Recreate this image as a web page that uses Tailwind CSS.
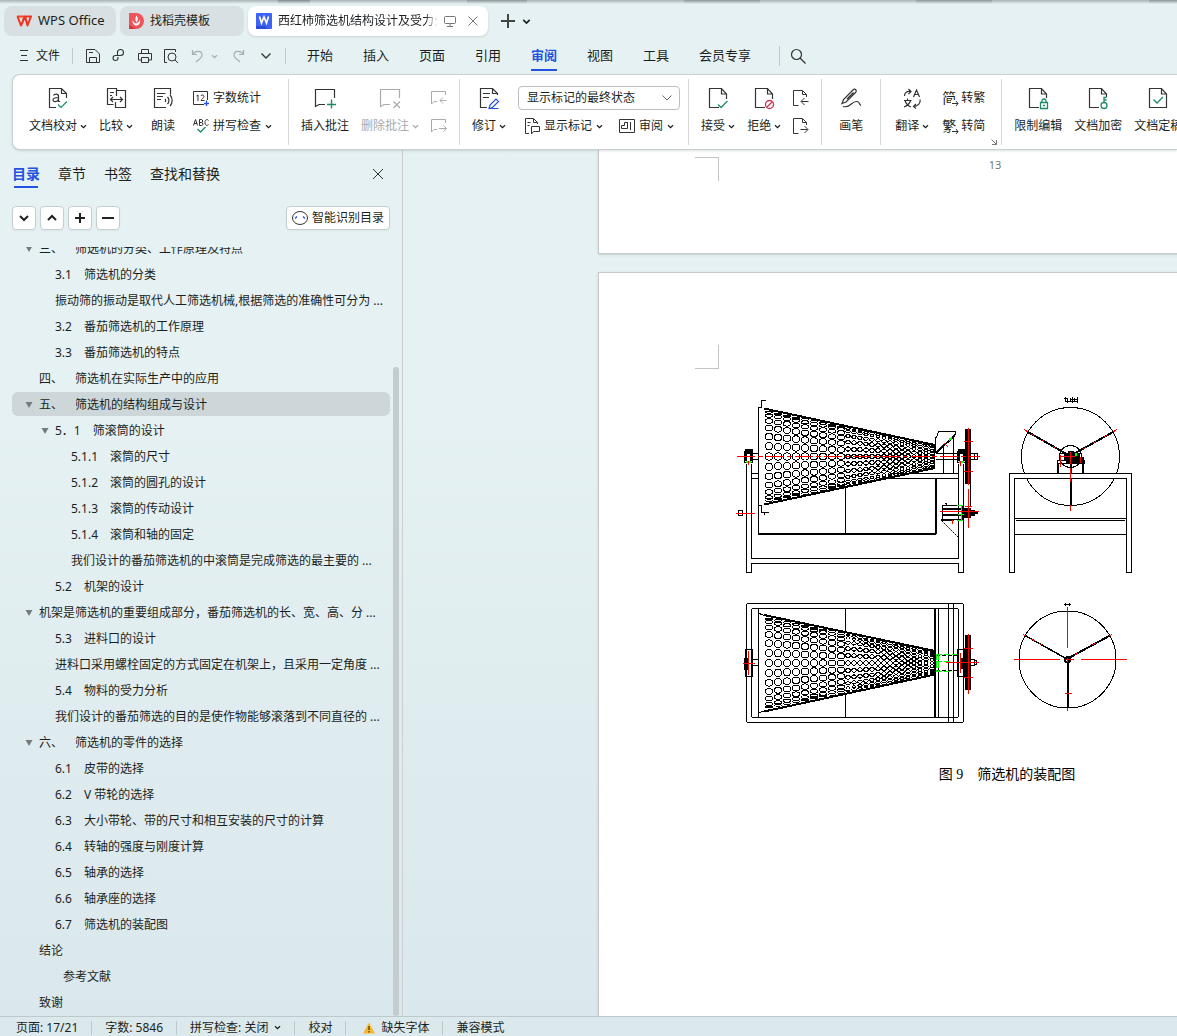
<!DOCTYPE html>
<html lang="zh-CN">
<head>
  <meta charset="UTF-8" />
  <meta name="viewport" content="width=device-width, initial-scale=1.0" />
  <title>WPS Office</title>
  <script src="https://cdn.jsdelivr.net/npm/@tailwindcss/browser@4"></script>
</head>
<body class="h-screen flex flex-col overflow-hidden bg-linear-to-b from-[#e5f1f2] from-40% to-[#dae7ec] text-xs text-[#1c1f21] [text-spacing-trim:space-all] font-['Noto_Sans','Noto_Sans_CJK_SC',sans-serif]">

  <!-- Shared icons -->
  <svg class="hidden">
    <symbol id="chev" viewBox="0 0 7 7"><path d="M1 2.3 L3.5 4.7 L6 2.3" fill="none" stroke="currentColor" stroke-width="1.3" /></symbol>
    <symbol id="page" viewBox="0 0 24 24"><path d="M20.500 13V8L15.500 2.500H3.500V21.500H13M15.500 3V8H20.500" fill="none" stroke="#333" stroke-width="1.200" /></symbol>
    <symbol id="arrow" viewBox="0 0 10 10"><path d="M1.500 2H8.500L5 8z" fill="#757b7d" /></symbol>
  </svg>

  <!-- Tabs -->
  <header class="shrink-0">
    <div class="relative h-1 flex justify-between pl-[278px] bg-[#a9b3b5]">
      <span class="w-8 bg-[#7f8789]"></span>
      <span class="w-15 bg-[#8b9496]"></span>
      <span class="w-19 bg-[#8b9496]"></span>
      <span class="w-19 bg-[#8b9496]"></span>
      <span class="w-7 bg-[#8b9496]"></span>
      <div class="absolute inset-0 bg-linear-to-b from-[#e5f1f2]/0 to-[#e5f1f2]"></div>
    </div>
    <div class="flex items-center gap-1 px-1 pt-0.5">
      <button class="h-[30px] w-28 px-3 flex items-center gap-1.5 rounded-lg bg-[#d8e0e3]">
        <svg class="w-4 h-3 shrink-0" viewBox="0 0 16 12" fill="none" stroke-width="2" stroke-linejoin="round">
          <path d="M1 1.500H8.500L7 5.500" stroke="#f04a2a" />
          <path d="M1.500 1.500L5 10.500L9 1.500L11.500 10.500L15 1.500H10" stroke="#ee3320" />
        </svg>
        <span class="text-[13px] whitespace-nowrap">WPS Office</span>
      </button>
      <button class="h-[30px] w-[124px] px-2 flex items-center gap-1.5 rounded-lg bg-[#d8e0e3]">
        <svg class="size-4 shrink-0" viewBox="0 0 16 16">
          <path d="M1 0h7a7.500 7.500 0 0 1 0 16H1z" fill="#ef5459" />
          <path d="M1 12l7 4H1z" fill="#d8363f" />
          <path d="M8.500 2.500C10.500 5 10 7.500 8.500 9.500C7 7.500 7 5 8.500 2.500zM4.500 6.500C5 8.500 6 10 8 10.500C10 10 11.500 8.500 12 6C12.500 9.500 11.500 12.500 8.500 12.500S4.500 10 4.500 6.500z" fill="#fff" />
        </svg>
        <span>找稻壳模板</span>
      </button>
      <div class="h-[30px] w-60 px-2 flex items-center gap-1.5 rounded-lg bg-white shadow">
        <svg class="size-4 shrink-0" viewBox="0 0 16 16">
          <rect width="16" height="16" rx="1" fill="#3c63f5" /><path d="M0 13h9l3 3H0z" fill="#2a4bd8" />
          <path d="M3.500 3.500L5.500 10L8 4L10.500 10L12.500 3.500" fill="none" stroke="#fff" stroke-width="1.700" />
        </svg>
        <span class="flex-1 overflow-hidden whitespace-nowrap mask-r-from-92%">西红柿筛选机结构设计及受力分析</span>
        <svg class="size-3 shrink-0" viewBox="0 0 12 12" fill="none" stroke="#777"><rect x="0.500" y="1.500" width="11" height="7" rx="1" /><path d="M6 9v2M3 11.500h6" /></svg>
        <button aria-label="关闭标签" class="ml-1.5 mr-0.5"><svg class="size-2.5" viewBox="0 0 10 10" stroke="#777"><path d="M0.500 0.500l9 9M9.500 0.500l-9 9" /></svg></button>
      </div>
      <button aria-label="新建" class="ml-2"><svg class="size-4" viewBox="0 0 16 16" stroke="#444" stroke-width="2"><path d="M8 1v14M1 8h14" /></svg></button>
      <button aria-label="更多标签" class="ml-0.5"><svg class="size-[9px]"><use href="#chev" /></svg></button>
    </div>
  </header>

  <!-- Menu bar -->
  <nav class="shrink-0 h-[38px] flex items-center pl-5 pt-0.5 whitespace-nowrap">
    <button class="flex items-center gap-2 w-[52px]">
      <svg class="w-2 h-3 shrink-0" viewBox="0 0 8 12" stroke="#333"><path d="M0 0.500h8M1 5.500h6M0 10.500h8" /></svg>文件
    </button>
    <span class="w-px h-4 bg-[#bccacc]"></span>
    <div class="flex items-center gap-2.5 pl-3 text-[#333]">
      <button aria-label="保存"><svg class="size-4" viewBox="0 0 16 16" fill="none" stroke="currentColor"><path d="M1.500 1.500H10L14.500 6V14.500H1.500zM4.500 14V9.500H11.500V14M4 4.500H8" /></svg></button>
      <button aria-label="分享"><svg class="size-4" viewBox="0 0 16 16" fill="none" stroke="currentColor" stroke-width="1.100"><path d="M6.500 7.500V4.500A3 3 0 1 1 9.500 7.500H4.500A2.500 2.500 0 1 0 7 10V9" /></svg></button>
      <button aria-label="打印"><svg class="size-4" viewBox="0 0 16 16" fill="none" stroke="currentColor"><path d="M4.500 5V1.500H11.500V5M4 12H1.500V5.500H14.500V12H12M4.500 9.500H11.500V14.500H4.500z" /></svg></button>
      <button aria-label="打印预览"><svg class="size-4" viewBox="0 0 16 16" fill="none" stroke="currentColor"><path d="M4 14.500H1.500V1.500H12.500V4" /><circle cx="9" cy="9" r="4" /><path d="M12 12L15 15" /></svg></button>
      <button aria-label="撤销" class="text-[#a3afb1] flex items-center gap-1.5"><svg class="size-4" viewBox="0 0 16 16" fill="none" stroke="currentColor" stroke-width="1.200"><path d="M3.500 2V6.500H8M3.500 6.500C6 2.500 13 2 13 7C13 10 9 12 7 14" /></svg><svg class="size-[7px]"><use href="#chev" /></svg></button>
      <button aria-label="恢复" class="ml-[3px] text-[#a3afb1]"><svg class="size-4" viewBox="0 0 16 16" fill="none" stroke="currentColor" stroke-width="1.200"><path d="M12.500 2V6.500H8M12.500 6.500C10 2.500 3 2 3 7C3 10 7 12 9 14" /></svg></button>
      <button aria-label="更多命令" class="ml-1"><svg class="w-2.5 h-2" viewBox="0 0 10 8" fill="none" stroke="currentColor" stroke-width="1.300"><path d="M0.500 1.500L5 6L9.500 1.500" /></svg></button>
    </div>
    <span class="w-px h-4 ml-3.5 bg-[#bccacc]"></span>
    <div class="flex gap-[30px] pl-[21px] pt-0.5 text-[13px]">
      <a href="#" class="py-1">开始</a>
      <a href="#" class="py-1">插入</a>
      <a href="#" class="py-1">页面</a>
      <a href="#" class="py-1">引用</a>
      <a href="#" class="py-1 border-b-2 border-[#2452e0] font-bold text-[#2452e0]">审阅</a>
      <a href="#" class="py-1">视图</a>
      <a href="#" class="py-1">工具</a>
      <a href="#" class="py-1">会员专享</a>
    </div>
    <span class="w-px h-5 ml-7 bg-[#bccacc]"></span>
    <button aria-label="搜索" class="ml-2.5"><svg class="size-4" viewBox="0 0 16 16" fill="none" stroke="#333" stroke-width="1.200"><circle cx="6.500" cy="6.500" r="5" /><path d="M10 10L15.500 15.500" /></svg></button>
  </nav>

  <!-- Ribbon -->
  <section class="relative z-10 shrink-0 h-[76px] ml-3 flex items-center rounded-l-lg border border-r-0 border-[#c6d2d3] bg-white shadow-sm whitespace-nowrap overflow-hidden *:shrink-0">
    <div class="h-[66px] flex items-center gap-3 pl-4 pr-4 pb-1 border-r border-[#d4d8d9]">
      <button class="flex flex-col gap-2">
        <svg class="size-6 self-center" viewBox="0 0 24 24" fill="none" stroke-width="1.200"><path d="M20.500 12V7.500L15.500 2.500H3.500V21.500H10M15.500 3V7.500H20.500" stroke="#333" /><path d="M7.500 9.500C8.500 7.500 12.500 7.500 12.500 10V15.500H14M12.500 11.500C9 11.500 7 12 7 14C7 16.500 11.500 16 12.500 13.500" stroke="#333" /><path d="M12 18.500L15 21.500L21 15.500" stroke="#1f8a68" /></svg>
        <span class="flex items-center gap-[3px]">文档校对<svg class="size-[7px]"><use href="#chev" /></svg></span>
      </button>
      <button class="flex flex-col gap-2 mr-1.5">
        <svg class="size-6 self-center" viewBox="0 0 24 24" fill="none" stroke="#333" stroke-width="1.200"><path d="M9.500 18.500H3.500V2.500H12.500V10M12.500 4.500H21.500V21.500H11.500V16M6 6.500H10M6 9.500H8M6.500 13.500H18.500M9 11L6.500 13.500L9 16M16 11L18.500 13.500L16 16" /></svg>
        <span class="flex items-center gap-[3px]">比较<svg class="size-[7px]"><use href="#chev" /></svg></span>
      </button>
      <button class="flex flex-col gap-2 mr-1.5">
        <svg class="size-6 self-center" viewBox="0 0 24 24" fill="none" stroke="#333" stroke-width="1.200"><path d="M19.500 8.500V2.500H3.500V21.500H15M6 7.500H14.500M6 10.500H12M6 13.500H10M14 13a2 2 0 0 1 0 3M16.500 11a5 5 0 0 1 0 7M19 9a8 8 0 0 1 0 11" /></svg>
        <span>朗读</span>
      </button>
      <div class="flex flex-col gap-3 pt-1">
        <button class="flex items-center gap-1">
          <svg class="size-4" viewBox="0 0 16 16" fill="none"><path d="M11 14.500H0.500V1.500H14.500V10" stroke="#333" /><path d="M3.500 6L5 5V11M8 6C8 4.500 11 4.500 11 6.500C11 8 8 9.500 8 10.500H11.500" stroke="#333" /><path d="M13.500 10.500V16M11 13.500H16" stroke="#2452e0" stroke-width="1.300" /></svg>字数统计
        </button>
        <button class="flex items-center gap-1">
          <svg class="size-4" viewBox="0 0 16 16" fill="none"><path d="M0.500 7.500L2.500 1.500L4.500 7.500M1 5.500H4M6.500 1.500V7.500H8.500C10.500 7.500 10.500 4.500 8.500 4.500H6.500M6.500 1.500H8.500C10 1.500 10 4.500 8.500 4.500M15.500 2.500C13.500 0.500 12 2 12 4.500S13.500 8.500 15.500 6.500" stroke="#333" /><path d="M4.500 11L7.500 14L12.500 9" stroke="#1f8a68" stroke-width="1.300" /></svg>拼写检查<svg class="size-[7px]"><use href="#chev" /></svg>
        </button>
      </div>
    </div>

    <div class="h-[66px] flex items-center gap-3 px-3 pb-1 border-r border-[#d4d8d9]">
      <button class="flex flex-col gap-2">
        <svg class="size-6 self-center" viewBox="0 0 24 24" fill="none" stroke-width="1.200"><path d="M21.500 12V3.500H2.500V20.500L6 18.500H12" stroke="#333" /><path d="M18.500 13.500V22.500M14 18.500H23" stroke="#1f8a68" stroke-width="1.400" /></svg>
        <span>插入批注</span>
      </button>
      <button class="flex flex-col gap-2 text-[#aaa]" disabled>
        <svg class="size-6 self-center" viewBox="0 0 24 24" fill="none" stroke="currentColor" stroke-width="1.200"><path d="M21.500 12V3.500H2.500V20.500L6 18.500H12M15.500 15.500L22 22M22 15.500L15.500 22" /></svg>
        <span class="flex items-center gap-[3px]">删除批注<svg class="size-[7px]"><use href="#chev" /></svg></span>
      </button>
      <div class="flex flex-col gap-3 pt-1 text-[#aaa]">
        <button aria-label="上一条批注" disabled><svg class="size-4" viewBox="0 0 16 16" fill="none" stroke="currentColor"><path d="M14.500 5V1.500H0.500V14L3 11.500H6M15.500 10.500H9M12 7.500L9 10.500L12 13.500" /></svg></button>
        <button aria-label="下一条批注" disabled><svg class="size-4" viewBox="0 0 16 16" fill="none" stroke="currentColor"><path d="M14.500 5V1.500H0.500V14L3 11.500H6M8 10.500H15.500M12.500 7.500L15.500 10.500L12.500 13.500" /></svg></button>
      </div>
    </div>

    <div class="h-[66px] flex items-center gap-3 pl-3 pr-2 pb-1 border-r border-[#d4d8d9]">
      <button class="flex flex-col gap-2">
        <svg class="size-6 self-center" viewBox="0 0 24 24" fill="none" stroke-width="1.200"><path d="M20.500 9V7.500L15.500 2.500H3.500V21.500H10M15.500 3V7.500H20.500M6 7.500H13M6 11.500H12" stroke="#333" /><path d="M12 22.500L13 19L19 13L21.500 15.500L15.500 21.500zH21.500" stroke="#2452e0" /></svg>
        <span class="flex items-center gap-[3px]">修订<svg class="size-[7px]"><use href="#chev" /></svg></span>
      </button>
      <div class="flex flex-col gap-2">
        <div class="relative">
          <select aria-label="修订显示状态" class="appearance-none w-[162px] h-6 pl-2 border border-[#b9bfc1] rounded bg-white">
            <option>显示标记的最终状态</option>
            <option>最终状态</option>
            <option>显示标记的原始状态</option>
            <option>原始状态</option>
          </select>
          <svg class="absolute right-2 top-2 w-2.5 h-2 pointer-events-none" viewBox="0 0 10 8" fill="none" stroke="#666"><path d="M0.500 1.500L5 6L9.500 1.500" /></svg>
        </div>
        <div class="flex justify-between pl-1.5 pr-1.5">
          <button class="flex items-center gap-1">
            <svg class="size-4" viewBox="0 0 16 16" fill="none" stroke="#333"><path d="M5 15.500H1.500V0.500H9.500L13.500 4.500V6M9.500 1V4.500H13M3.500 4.500H6.500M3.500 7.500H5.500M7.500 16V8.500H15.500V13.500H9.500z" /></svg>显示标记<svg class="size-[7px]"><use href="#chev" /></svg>
          </button>
          <button class="flex items-center gap-1">
            <svg class="size-4" viewBox="0 0 16 16" fill="none" stroke="#333"><path d="M0.500 1.500H15.500V14.500H0.500zM11.500 4V12M8.500 4V10.500H2.500V7.500H5.500V4.500H8.500" /></svg>审阅<svg class="size-[7px]"><use href="#chev" /></svg>
          </button>
        </div>
      </div>
    </div>

    <div class="h-[66px] flex items-center gap-3 px-3 pb-1 border-r border-[#d4d8d9]">
      <button class="flex flex-col gap-2">
        <svg class="size-6 self-center" viewBox="0 0 24 24" fill="none"><use href="#page" /><path d="M12 18.500L15 21.500L21.500 15" stroke="#1f8a68" stroke-width="1.300" /></svg>
        <span class="flex items-center gap-[3px]">接受<svg class="size-[7px]"><use href="#chev" /></svg></span>
      </button>
      <button class="flex flex-col gap-2">
        <svg class="size-6 self-center" viewBox="0 0 24 24" fill="none"><use href="#page" /><circle cx="17.500" cy="18.500" r="5" fill="#fff" /><circle cx="17.500" cy="18.500" r="4" stroke="#cf3350" stroke-width="1.300" /><path d="M15 21L20 16" stroke="#cf3350" stroke-width="1.300" /></svg>
        <span class="flex items-center gap-[3px]">拒绝<svg class="size-[7px]"><use href="#chev" /></svg></span>
      </button>
      <div class="flex flex-col gap-3 pt-1">
        <button aria-label="上一条修订"><svg class="size-4" viewBox="0 0 16 16" fill="none" stroke="#333"><path d="M5.500 15.500H0.500V0.500H9.500L13.500 4.500V7M9.500 1V4.500H13.500M15.500 11.500H8.500M11.500 8L8 11.500L11.500 15" /></svg></button>
        <button aria-label="下一条修订"><svg class="size-4" viewBox="0 0 16 16" fill="none" stroke="#333"><path d="M5.500 15.500H0.500V0.500H9.500L13.500 4.500V7M9.500 1V4.500H13.500M7.500 11.500H14.500M11.500 8L15 11.500L11.500 15" /></svg></button>
      </div>
    </div>

    <div class="h-[66px] flex items-center px-[17px] pb-1 border-r border-[#d4d8d9]">
      <button class="flex flex-col gap-2">
        <svg class="size-6 self-center" viewBox="0 0 24 24" fill="none" stroke="#333" stroke-width="1.200"><path d="M3 17.500L4.500 13.500L14 4C16 2 18.500 4.500 16.500 6.500L7 16zM14.500 6.500L8 13M4 20.500C12 22.500 12 15 18 15.500C21 16 20 18.500 22 19.500" /></svg>
        <span>画笔</span>
      </button>
    </div>

    <div class="relative h-[66px] flex items-center gap-3 pl-3.5 pr-4 pb-1 border-r border-[#d4d8d9]">
      <button class="flex flex-col gap-2">
        <svg class="size-6 self-center" viewBox="0 0 24 24" fill="none" stroke="#333" stroke-width="1.200"><path d="M4.500 10C4.500 6.500 7 5 10.500 5.500M8.500 3L11 5.500L8.500 8M13.500 11L16.500 4L19.500 11M14.500 8.500H18.500M4 14.500H11.500M7.500 12.500V14.500M5 14.500C6 18 8 20 11 21M10.500 14.500C9.500 18 7 20 4 21M20 13.500C21 17 18 20 14 20.500M16 18L13.500 20.500L16 22.500" /></svg>
        <span class="flex items-center gap-[3px]">翻译<svg class="size-[7px]"><use href="#chev" /></svg></span>
      </button>
      <div class="flex flex-col gap-3 pt-1">
        <button class="flex items-center gap-1"><span class="relative w-4 text-sm leading-4">简<svg class="absolute -right-0.5 bottom-0 w-2 h-1.5 bg-white" viewBox="0 0 8 6" fill="none" stroke="#333"><path d="M1 3.500H7M5 1L7 3.500L5 6" /></svg></span>转繁</button>
        <button class="flex items-center gap-1"><span class="relative w-4 text-sm leading-4">繁<svg class="absolute -right-0.5 bottom-0 w-2 h-1.5 bg-white" viewBox="0 0 8 6" fill="none" stroke="#333"><path d="M1 3.500H7M5 1L7 3.500L5 6" /></svg></span>转简</button>
      </div>
      <button aria-label="中文简繁转换设置" class="absolute right-1 bottom-0"><svg class="size-1.5" viewBox="0 0 6 6" fill="none" stroke="#777"><path d="M0.500 0.500L5.500 5.500M5.500 1V5.500H1" /></svg></button>
    </div>

    <div class="h-[66px] flex items-center gap-3 px-3 pb-1">
      <button class="flex flex-col gap-2">
        <svg class="size-6 self-center" viewBox="0 0 24 24" fill="none"><use href="#page" /><path d="M13 12H23V24H13z" fill="#fff" /><path d="M14.500 16.500H21.500V22.500H14.500zM16 16.500V14.500C16 12.500 20 12.500 20 14.500V16.500M17 19.500H19" stroke="#1f8a68" stroke-width="1.300" /></svg>
        <span>限制编辑</span>
      </button>
      <button class="flex flex-col gap-2">
        <svg class="size-6 self-center" viewBox="0 0 24 24" fill="none"><use href="#page" /><path d="M14 11H22V24H14z" fill="#fff" /><circle cx="18" cy="19.500" r="3" stroke="#1f8a68" stroke-width="1.300" /><path d="M18 16.500V11.500H20.500M18 14H20.500" stroke="#1f8a68" stroke-width="1.300" /></svg>
        <span>文档加密</span>
      </button>
      <button class="flex flex-col gap-2">
        <svg class="size-6 self-center" viewBox="0 0 24 24" fill="none"><path d="M3.500 2.500H15.500L20.500 8V21.500H3.500zM15.500 3V8H20.500" stroke="#333" stroke-width="1.200" /><path d="M7.500 13.500L11 17L17 11" stroke="#1f8a68" stroke-width="1.300" /></svg>
        <span>文档定稿</span>
      </button>
    </div>
  </section>

  <main class="flex-1 min-h-0 flex">
    <!-- Outline pane -->
    <aside class="w-[403px] shrink-0 flex flex-col border-r border-[#cbcfd0]">
      <div class="flex items-start gap-[18px] pt-3.5 pl-3 pr-[18px] text-sm leading-5">
        <button class="flex flex-col items-center gap-0.5 font-bold text-[#2452e0]">目录<span class="w-6 h-0.5 bg-[#2452e0]"></span></button>
        <button>章节</button>
        <button>书签</button>
        <button>查找和替换</button>
        <button aria-label="关闭" class="ml-auto pt-1"><svg class="size-3" viewBox="0 0 12 12" stroke="#333"><path d="M1 1L11 11M11 1L1 11" /></svg></button>
      </div>
      <div class="flex items-center gap-1 pt-[18px] pl-3 pr-3">
        <button aria-label="展开" class="size-6 flex items-center justify-center rounded border border-[#c5cfd1] bg-white shadow-xs"><svg class="size-3" viewBox="0 0 12 12" fill="none" stroke="#222" stroke-width="2"><path d="M2 4L6 8L10 4" /></svg></button>
        <button aria-label="收起" class="size-6 flex items-center justify-center rounded border border-[#c5cfd1] bg-white shadow-xs"><svg class="size-3" viewBox="0 0 12 12" fill="none" stroke="#222" stroke-width="2"><path d="M2 8L6 4L10 8" /></svg></button>
        <button aria-label="增加层级" class="size-6 flex items-center justify-center rounded border border-[#c5cfd1] bg-white shadow-xs"><svg class="size-3" viewBox="0 0 12 12" stroke="#222" stroke-width="2"><path d="M6 1V11M1 6H11" /></svg></button>
        <button aria-label="减少层级" class="size-6 flex items-center justify-center rounded border border-[#c5cfd1] bg-white shadow-xs"><svg class="size-3" viewBox="0 0 12 12" stroke="#222" stroke-width="2"><path d="M0 6H12" /></svg></button>
        <button class="ml-auto h-6 px-[5px] flex items-center gap-1 rounded border border-[#c5cfd1] bg-white shadow-xs">
          <svg class="size-4" viewBox="0 0 16 16" fill="none"><ellipse cx="8" cy="8" rx="7.500" ry="6.500" stroke="#333" /><path d="M3 8.500L5 6.500M13 8.500L11 6.500" stroke="#2452e0" stroke-width="1.200" /></svg>智能识别目录
        </button>
      </div>
      <div class="flex-1 min-h-0 flex mt-[17px] overflow-hidden">
        <ul id="outline" class="flex-1 min-w-0 -mt-3 pl-3"></ul>
        <div class="w-3 flex flex-col"><div class="mt-[120px] mx-[3px] flex-1 rounded-full bg-[#c3cccf]"></div></div>
      </div>
    </aside>

    <!-- Document -->
    <div class="flex-1 min-w-0 overflow-hidden pl-[195px]">
      <article class="w-[794px] h-[104px] flex flex-col border border-t-0 border-[#c8c8c8] bg-white shadow">
        <div class="mt-[7px] ml-24 flex"><span class="size-6 border-t border-r border-[#c4c4c4]"></span></div>
        <p class="-mt-6 text-center text-[11px] leading-4 text-[#777]">13</p>
      </article>
      <article class="mt-[18px] w-[794px] h-[1123px] border border-[#c8c8c8] bg-white shadow">
        <div class="mt-[72px] ml-24 size-6 border-b border-r border-[#c4c4c4]"></div>
        <svg id="drawing" class="mt-[21px] mx-auto w-[530px] h-[350px]" viewBox="730 390 530 350" fill="none" stroke="#000" shape-rendering="crispEdges">
          <!-- front view: frame -->
          <path d="M746.500 464V572.500H751.500V563.500H958.500V572.500H963.500V464M751.500 464V558.500H958.500V464M751.500 473.500H758M751.500 478.500H758M890 473.500H958M880 478.500H958" />
          <path d="M758.500 533V407.500H761.500V400.500H765.500M758.500 505.500H761.500V512.500H768.500M764.500 512V515M845.500 488V533M934.500 444V469" />
          <path d="M758 533.500H936M935.500 478V534" stroke-width="2" />
          <path d="M764 408.500L935 445M764 504.500L935 468" stroke-width="2" />
          <g id="frontHoles"></g>
          <path d="M752 453.500H758M752 459.500H758M936 453.500H958M936 459.500H958" />
          <!-- bearings -->
          <path d="M744.500 451.500H752.500V462.500H744.500zM957.500 451.500H965.500V462.500H957.500z" />
          <path d="M745 449H752V453H745zM958 449H965V453H958z" fill="#000" />
          <path d="M746 453V461M751 453V461M959 453V461M964 453V461" stroke-width="2" />
          <path d="M746 462H751M959 462H964" stroke="#0f0" stroke-width="2" />
          <!-- hopper -->
          <path d="M935.500 453V437.500H936.500L938.500 431.500H955.500V434.500M943.500 445V473M953.500 438V473" />
          <path d="M936 453L955 435" stroke-width="2" />
          <path d="M949 440L952 438" stroke="#0f0" stroke-width="2" />
          <path d="M944 443L948 447" stroke="#f00" />
          <!-- pulley and motor -->
          <path d="M965.500 429.500H970.500V483H965.500z" fill="#000" />
          <path d="M970.500 484V507M971 453.500H977V459.500H971M974.500 453V460" />
          <path d="M942.500 505.500H962.500V519.500H942.500zM944.500 503.500H946.500V505" />
          <path d="M943 509H962M943 515H962M941 520H954" stroke-width="2" />
          <path d="M964 508H970V517H964zM971 510H974V515H971z" fill="#000" />
          <path d="M974 512H978" stroke-width="3" />
          <path d="M942 521L958 537" stroke-dasharray="2 1" shape-rendering="auto" />
          <path d="M957 505.500H963M961.500 505V521M958 514.500H964M957 520.500H963" stroke="#0f0" />
          <path d="M738.500 510.500H742.500V515.500H738.500z" />
          <!-- centre lines -->
          <path d="M737 456.500H980" stroke="#f00" stroke-dasharray="18 3 5 3" />
          <path d="M736 513.500H755M940 511.500H979M968.500 428V485M968.500 489V528M964 441.500H973M964 471.500H973M952.500 520V524M748.500 461V465M960.500 461V466M965 506.500H972" stroke="#f00" />

          <!-- side view -->
          <circle cx="1070.500" cy="456.500" r="49" />
          <circle cx="1070.500" cy="456.500" r="11" />
          <path d="M1027 431.500L1070 456L1114 431.500M1071 457V506" stroke-width="2" />
          <path d="M1024 429.500L1028 432M1031 434L1034 435.500M1042 440L1044 441.500M1053 446.500L1055 447.500M1117 429.500L1113 432M1107 435.500L1104 437M1096 441.500L1093 443M1086 447.500L1083 449" stroke="#f00" />
          <path d="M1057.500 460.500H1084.500V463.500H1057.500zM1059.500 453.500H1064.500V460" />
          <path d="M1058 463V473M1083 463V473" stroke-width="2" />
          <path d="M1065 453H1068V451H1073V453H1079V457H1083V463H1066V459H1065z" fill="#000" />
          <path d="M1015 474H1126V478H1015z" fill="#fff" stroke="none" />
          <path d="M1014.500 572.500H1009.500V473.500H1131.500V572.500H1126.500V478.500H1014.500zM1014.500 518.500H1126.500M1016 520.500H1125M1014.500 534.500H1126.500" />
          <path d="M1075 454.500H1077" stroke="#0f0" stroke-width="3" />
          <path d="M1061 456.500H1076M1070.500 452V464M1070.500 468V482M1070.500 505V511M1060.500 455V467M1080.500 457V463" stroke="#f00" />
          <path d="M1064 398.500H1068M1070 399.500H1078M1065 401.500H1078M1065.500 397V402M1067.500 399V403M1070.500 398V402M1072.500 397V403M1074.500 398V402M1077.500 397V403" />

          <!-- top view: frame -->
          <rect x="746.500" y="603.500" width="217" height="119" rx="2" />
          <rect x="751.500" y="608.500" width="207" height="109" rx="2" />
          <path d="M758.500 609V717M845.500 609V633M845.500 693V717M938.500 609V717M948.500 604V722M953.500 604V722" />
          <path d="M935 609V717" stroke-width="2" />
          <path d="M758 613L764 615.500M758 713L764 711" />
          <path d="M764 615L935 651M764 711.500L935 674.500" stroke-width="2" />
          <g id="topHoles"></g>
          <path d="M752 659.500H758M752 665.500H758M745.500 649.500H752.500V676.500H745.500z" />
          <path d="M744 658H747V669H744zM751 658H752V669H751z" fill="#000" />
          <path d="M936 655.500H958M936 670.500H958" stroke-dasharray="4 2" />
          <path d="M936 654.500H958M936.500 654V672M938.500 654V672M936 661.500H950M936 671.500H952M957.500 657V672" stroke="#0f0" stroke-dasharray="6 2" />
          <path d="M957.500 649.500H964.500V676.500H957.500z" />
          <path d="M960 658H965V668H960z" fill="#000" />
          <path d="M965.500 635.500H970.500V689.500H965.500z" fill="#000" />
          <path d="M971 659.500H974.500V665.500H971M974.500 660.500H976.500V664.500H974" />
          <path d="M743 663.500H755M748.500 651V675M946 662.500H979M968.500 634V694M964 648.500H973M964 677.500H973M960.500 653V673" stroke="#f00" />

          <!-- sieve section -->
          <circle cx="1067.500" cy="659.500" r="48.500" />
          <path d="M1025 635.500L1067 659" stroke-width="1.500" />
          <path d="M1067 659L1110 635.500M1067.500 660V708" stroke-width="2" />
          <path d="M1014 659.500H1060M1081 659.500H1127M1067.500 607V648M1023 634.500L1026 636M1031 639L1035 641M1039 643.500L1042 645M1112 634.500L1109 636M1096 643L1092 645M1078 653L1075 655M1065 693.500H1072M1067.500 708V711" stroke="#f00" />
          <circle cx="1067.500" cy="659.500" r="2.500" stroke-width="2" />
          <path d="M1066 659.500H1074M1067.500 658V662" stroke="#f00" />
          <path d="M1064 604.500H1071M1065.500 603V606M1069.500 603V606" />
        </svg>
        <p class="mt-[25px] pl-6 flex justify-center text-sm leading-5 text-black font-['Liberation_Serif','Noto_Sans_CJK_SC',serif]"><span>图 9　筛选机的装配图</span></p>
      </article>
    </div>
  </main>

  <!-- Status bar -->
  <footer class="shrink-0 h-5 flex items-center gap-[13px] pl-4 pt-0.5 border-t border-[#bdc9cc] bg-[#dbe8ec] whitespace-nowrap">
    <span>页面: 17/21</span>
    <span class="w-px h-3.5 bg-[#bccacc]"></span>
    <span>字数: 5846</span>
    <span class="w-px h-3.5 bg-[#bccacc]"></span>
    <button class="flex items-center gap-1.5">拼写检查: 关闭<svg class="size-[7px]"><use href="#chev" /></svg></button>
    <span class="w-px h-3.5 bg-[#bccacc]"></span>
    <button>校对</button>
    <span class="w-px h-3.5 bg-[#bccacc]"></span>
    <button class="flex items-center gap-1.5 pl-1"><svg class="size-3" viewBox="0 0 12 12"><path d="M6 0.500L12 11.500H0z" fill="#f7b731" /><path d="M6 4V8M6 9V10.500" stroke="#5a3a00" stroke-width="1.300" /></svg>缺失字体</button>
    <span class="w-px h-3.5 bg-[#bccacc]"></span>
    <span>兼容模式</span>
  </footer>

  <script>
    // [level, has children, text]
    const outline = [
      [1, true, '三、　筛选机的分类、工作原理及特点'],
      [2, false, '3.1　筛选机的分类'],
      [2, false, '振动筛的振动是取代人工筛选机械,根据筛选的准确性可分为 ...'],
      [2, false, '3.2　番茄筛选机的工作原理'],
      [2, false, '3.3　番茄筛选机的特点'],
      [1, false, '四、　筛选机在实际生产中的应用'],
      [1, true, '五、　筛选机的结构组成与设计'],
      [2, true, '5．1　筛滚筒的设计'],
      [3, false, '5.1.1　滚筒的尺寸'],
      [3, false, '5.1.2　滚筒的圆孔的设计'],
      [3, false, '5.1.3　滚筒的传动设计'],
      [3, false, '5.1.4　滚筒和轴的固定'],
      [3, false, '我们设计的番茄筛选机的中滚筒是完成筛选的最主要的 ...'],
      [2, false, '5.2　机架的设计'],
      [1, true, '机架是筛选机的重要组成部分，番茄筛选机的长、宽、高、分 ...'],
      [2, false, '5.3　进料口的设计'],
      [2, false, '进料口采用螺栓固定的方式固定在机架上，且采用一定角度 ...'],
      [2, false, '5.4　物料的受力分析'],
      [2, false, '我们设计的番茄筛选的目的是使作物能够滚落到不同直径的 ...'],
      [1, true, '六、　筛选机的零件的选择'],
      [2, false, '6.1　皮带的选择'],
      [2, false, '6.2　V 带轮的选择'],
      [2, false, '6.3　大小带轮、带的尺寸和相互安装的尺寸的计算'],
      [2, false, '6.4　转轴的强度与刚度计算'],
      [2, false, '6.5　轴承的选择'],
      [2, false, '6.6　轴承座的选择'],
      [2, false, '6.7　筛选机的装配图'],
      [1, false, '结论'],
      [1, false, '　　参考文献'],
      [1, false, '致谢']
    ];
    const indent = { 1: 'pl-3', 2: 'pl-7', 3: 'pl-11' };
    const selected = 6;

    document.getElementById('outline').innerHTML = outline.map(([level, open, text], i) => `
      <li class="py-px">
        <a href="#" class="h-6 pt-0.5 flex items-center gap-[5px] rounded-md whitespace-pre ${indent[level]} ${i === selected ? 'bg-[#cdd7d9]' : ''}">
          <svg class="size-2.5 shrink-0">${open ? '<use href="#arrow" />' : ''}</svg>${text}</a>
      </li>`).join('');

    // Holes of the sieve drum: each column follows the cone, rows foreshorten towards the edges
    function drawHoles(id, cy) {
      let out = '';
      const column = (x, r, rows, step) => {
        const half = 46 - (x - 765) * 35 / 169;
        for (let k = -rows; k <= rows; k++) {
          const a = k * step * Math.PI / 180;
          const pitch = half * Math.sin(step * Math.PI / 180);
          const ry = Math.max(Math.min(r, pitch * 0.42) * Math.cos(a), 0.8);
          out += `<ellipse cx="${x}" cy="${(cy + half * Math.sin(a)).toFixed(1)}" rx="${r}" ry="${ry.toFixed(1)}" />`;
        }
      };
      for (let x = 769; x < 844; x += 9) column(x, 3.7, 6, 13);
      for (let x = 848; x < 934; x += 6) column(x, 2.2, 5, 15);
      document.getElementById(id).innerHTML = out;
    }
    drawHoles('frontHoles', 456.5);
    drawHoles('topHoles', 663);
  </script>
</body>
</html>
